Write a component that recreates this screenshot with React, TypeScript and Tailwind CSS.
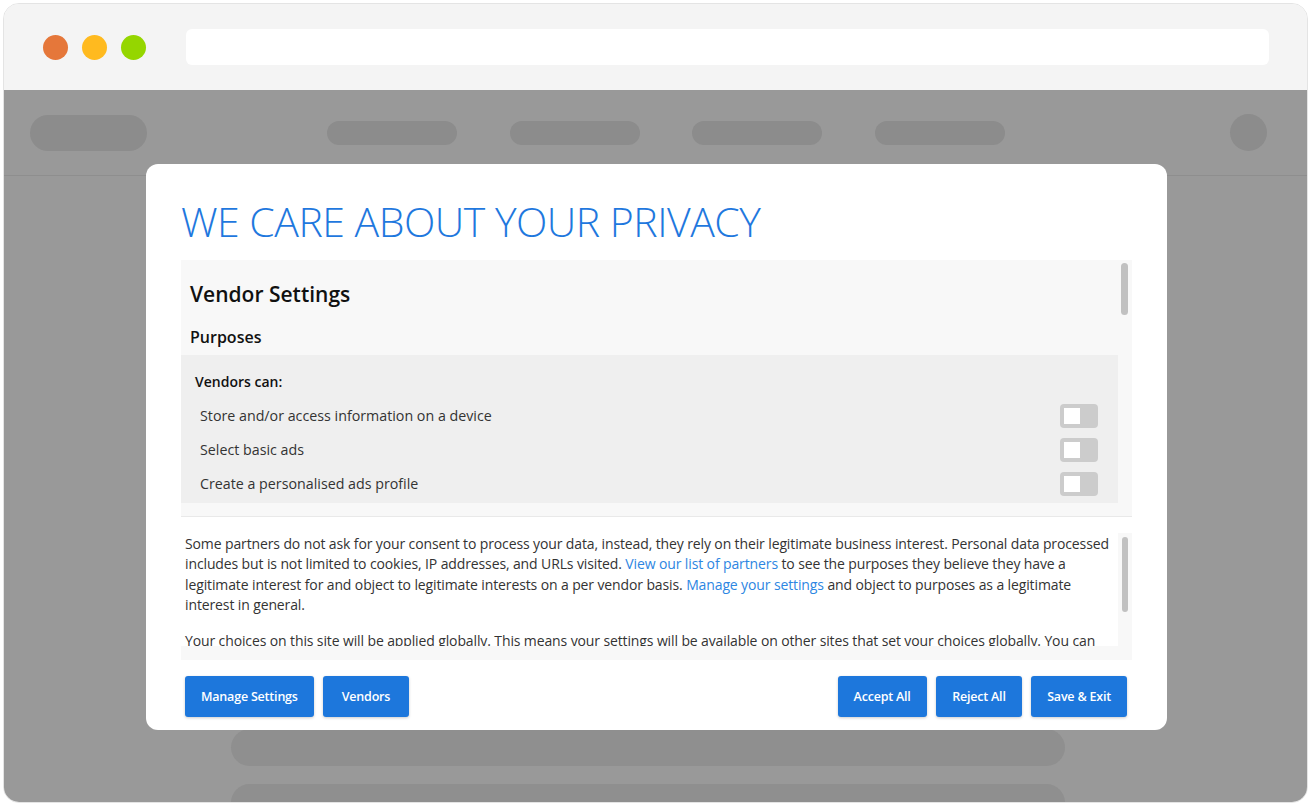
import React from 'react';

const purposes = [
  'Store and/or access information on a device',
  'Select basic ads',
  'Create a personalised ads profile',
  'Select personalised ads',
];

function Toggle() {
  return (
    <div className="flex h-[24px] w-[38px] items-center rounded-[4px] bg-[#cccccc] pl-[4px]">
      <div className="h-[16px] w-[16px] bg-white" />
    </div>
  );
}

function Button({ label, wide }: { label: string; wide?: boolean }) {
  return (
    <button
      className={
        wide
          ? 'h-[41px] rounded-[3px] bg-[#1d77dc] px-[19px] pt-[2px] text-[12.5px] font-semibold tracking-[-0.2px] text-white shadow-[0_1px_3px_rgba(0,0,0,0.2)]'
          : 'h-[41px] rounded-[3px] bg-[#1d77dc] px-[16px] pt-[2px] text-[12.5px] font-semibold tracking-[-0.2px] text-white shadow-[0_1px_3px_rgba(0,0,0,0.2)]'
      }
    >
      {label}
    </button>
  );
}

export default function App() {
  return (
    <div className="h-[804px] w-[1309px] bg-white pl-[3px] pt-[3px] font-['Open_Sans',sans-serif]">
      {/* browser window */}
      <div className="relative flex h-[800px] w-[1305px] flex-col overflow-hidden rounded-[16px] border border-[#e4e4e4]">
        <div className="flex h-[86px] shrink-0 items-center bg-[#f4f4f4] pl-[39px] pr-[38px]">
          <div className="flex gap-[14px]">
            <span className="h-[25px] w-[25px] rounded-full bg-[#e5773a]" />
            <span className="h-[25px] w-[25px] rounded-full bg-[#ffba1f]" />
            <span className="h-[25px] w-[25px] rounded-full bg-[#95d600]" />
          </div>
          <div className="ml-[40px] h-[36px] flex-1 rounded-[6px] bg-white" />
        </div>

        <div className="flex-1 bg-[#999999]">
          <div className="flex h-[86px] items-center border-b border-[#8e8e8e] pl-[26px] pr-[40px]">
            <div className="h-[36px] w-[117px] rounded-full bg-[#8c8c8c]" />
            <div className="ml-[180px] flex gap-[52.5px]">
              <div className="h-[24px] w-[130px] rounded-full bg-[#8c8c8c]" />
              <div className="h-[24px] w-[130px] rounded-full bg-[#8c8c8c]" />
              <div className="h-[24px] w-[130px] rounded-full bg-[#8c8c8c]" />
              <div className="h-[24px] w-[130px] rounded-full bg-[#8c8c8c]" />
            </div>
            <div className="flex-1" />
            <div className="h-[37px] w-[37px] rounded-full bg-[#8c8c8c]" />
          </div>
          <div className="flex flex-col gap-[18px] pl-[227px] pt-[58px]">
            {Array.from({ length: 11 }).map((_, i) => (
              <div key={i} className="h-[37px] w-[834px] rounded-full bg-[#8f8f8f]" />
            ))}
          </div>
        </div>

        {/* consent dialog */}
        <div className="absolute left-[142px] top-[160px] flex h-[566px] w-[1021px] flex-col rounded-[12px] bg-white px-[35px] pt-[36px]">
          <h1 className="whitespace-nowrap text-[41px] font-light leading-[42px] tracking-[-0.5px] text-[#1f78de]">
            WE CARE ABOUT YOUR PRIVACY
          </h1>

          <div className="mt-[18px] flex h-[257px] shrink-0 border-b border-[#e9e9e9] bg-[#f8f8f8]">
            <div className="h-[243px] w-[937px] overflow-hidden">
              <div className="pl-[9px] pt-[20px]">
                <h2 className="text-[21px] font-semibold leading-[28px] text-[#111]">Vendor Settings</h2>
                <h3 className="mt-[18px] text-[16px] font-semibold leading-[22px] text-[#111]">Purposes</h3>
              </div>
              <div className="mt-[7px] bg-[#efefef] pb-[2px] pr-[20px] pt-[17px]">
                <p className="pl-[14px] text-[14px] font-semibold leading-[20px] text-[#111]">Vendors can:</p>
                <div className="mt-[7px]">
                  {purposes.map((p) => (
                    <div key={p} className="flex h-[34px] items-center justify-between pl-[19px]">
                      <span className="text-[14.25px] text-[#333]">{p}</span>
                      <Toggle />
                    </div>
                  ))}
                </div>
              </div>
            </div>
            <div className="w-[14px] pl-[3px] pt-[3px]">
              <div className="h-[52px] w-[7px] rounded-full bg-[#c1c1c1]" />
            </div>
          </div>

          <div className="mt-[16px] flex h-[127px] shrink-0">
            <div className="flex w-[937px] flex-col">
              <div className="h-[113px] overflow-hidden bg-white pl-[4px] pt-[1px] text-[14px] leading-[20.3px] tracking-[-0.12px] text-[#333]">
                <p className="mb-[16px] whitespace-nowrap">
                  Some partners do not ask for your consent to process your data, instead, they rely on their legitimate business interest. Personal data processed
                  <br />
                  includes but is not limited to cookies, IP addresses, and URLs visited.{' '}
                  <a className="text-[#2d86e2]">View our list of partners</a> to see the purposes they believe they have a
                  <br />
                  legitimate interest for and object to legitimate interests on a per vendor basis.{' '}
                  <a className="text-[#2d86e2]">Manage your settings</a> and object to purposes as a legitimate
                  <br />
                  interest in general.
                </p>
                <p className="whitespace-nowrap">
                  Your choices on this site will be applied globally. This means your settings will be available on other sites that set your choices globally. You can
                  <br />
                  change your settings at any time, including withdrawing your consent, by using the toggles on the Purposes or Vendors screens.
                </p>
              </div>
              <div className="h-[14px] bg-[#f8f8f8]" />
            </div>
            <div className="w-[14px] bg-[#f8f8f8] pl-[4px] pt-[4px]">
              <div className="h-[75px] w-[6px] rounded-full bg-[#c1c1c1]" />
            </div>
          </div>

          <div className="mt-[16px] flex justify-between pl-[4px] pr-[5px]">
            <div className="flex gap-[9px]">
              <Button label="Manage Settings" />
              <Button label="Vendors" wide />
            </div>
            <div className="flex gap-[9.5px]">
              <Button label="Accept All" />
              <Button label="Reject All" />
              <Button label="Save & Exit" />
            </div>
          </div>
        </div>
      </div>
    </div>
  );
}
